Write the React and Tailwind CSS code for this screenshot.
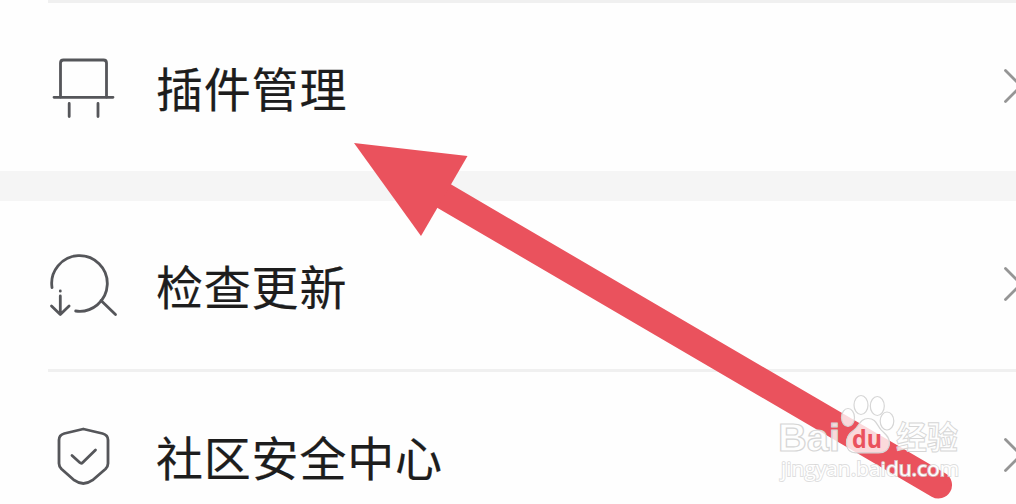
import React from 'react';

const iconProps = {
  fill: 'none',
  stroke: '#55565a',
  strokeWidth: 2.8,
  strokeLinecap: 'round',
  strokeLinejoin: 'round',
  className: 'h-[72px] w-[72px] shrink-0',
};

const PluginIcon = () => (
  <svg viewBox="0 0 72 72" {...iconProps}>
    <path d="M12.5 46V12q0-3 3-3h40q3 0 3 3v34" />
    <path d="M6 46.3h59M21.2 52.5v13M50 52.5v13" />
  </svg>
);

const UpdateIcon = () => (
  <svg viewBox="0 0 72 72" {...iconProps}>
    <path d="M4 38.5A27.8 27.8 0 1 1 27.7 62" />
    <path d="M53 51.5 67.5 65.5" />
    <path d="M12.3 42v.2M12.3 47v18M3.5 57l8.8 8.5 8.8-8.5" />
  </svg>
);

const ShieldIcon = () => (
  <svg viewBox="0 0 72 72" {...iconProps}>
    <path d="M35.3 9 54.5 13.5Q60 15 60 20V43.5Q60 46.5 57.5 49L44.5 60.2Q35.3 66.8 26.2 60.2L13.5 49Q11 46.5 11 43.5V20Q11 15 16.3 13.5Z" />
    <path d="m24 35.5 7.7 7q1.6 1.4 3 0L47.5 30" />
  </svg>
);

const Row = ({ icon, label }) => (
  <div className="flex h-[168px] shrink-0 items-center pl-12">
    {icon}
    <span className="ml-9 text-[47px] leading-[60px] tracking-[0.8px] text-[#1d1d1d] [-webkit-text-stroke:0.2px_#1d1d1d]">
      {label}
    </span>
    <svg
      viewBox="0 0 20 36"
      className="-mr-2 -mt-[3px] ml-auto h-9 w-5 shrink-0"
      fill="none"
      stroke="#959595"
      strokeWidth="2.8"
      strokeLinecap="round"
    >
      <path d="M1.5 2.5 17 18 1.5 33.5" />
    </svg>
  </div>
);

const Watermark = () => (
  <g
    fill="#fff"
    fillOpacity="0.78"
    stroke="#d6d6d6"
    strokeWidth="1.2"
    fontFamily="'Open Sans', 'Noto Sans CJK SC', sans-serif"
  >
    <text x="778" y="451" fontSize="39" fontWeight="700" textLength="62" lengthAdjust="spacingAndGlyphs" fontFamily="'Liberation Sans', sans-serif">Bai</text>
    <ellipse cx="861" cy="405" rx="7" ry="9.5" />
    <ellipse cx="877.3" cy="406" rx="7" ry="9.5" />
    <ellipse cx="848" cy="417.5" rx="6.5" ry="9" />
    <ellipse cx="887" cy="421" rx="6.8" ry="9" />
    <path d="M868 418.5c-8 0-9 8-14 11.5-6 4-8 8-7.5 14 .5 7 4 9 10 8.8h22c6 0 11-3 11-10 0-6-4-8.5-8-12.5-5-5-5-11.8-13.5-11.8Z" />
    <text x="852" y="448" fontSize="25" fontWeight="700" textLength="30" lengthAdjust="spacingAndGlyphs" fill="#ea525d" fillOpacity="1" stroke="none">du</text>
    <text x="896" y="449" fontSize="32" fontWeight="700" textLength="62" lengthAdjust="spacingAndGlyphs" fontFamily="'Noto Sans CJK SC', sans-serif" strokeWidth="0.9">经验</text>
    <text x="781" y="476" fontSize="20" textLength="178" lengthAdjust="spacingAndGlyphs" strokeWidth="1.8" strokeOpacity="0.8" paintOrder="stroke" fillOpacity="1">jingyan.baidu.com</text>
  </g>
);

export default function App() {
  return (
    <div className="relative flex h-[504px] w-[1016px] flex-col overflow-hidden bg-[#fefefe] font-['Noto_Sans_CJK_SC',sans-serif]">
      <div className="ml-12 h-[3px] shrink-0 bg-[#f0f0f0]" />
      <Row icon={<PluginIcon />} label="插件管理" />
      <div className="h-[30px] shrink-0 bg-[#f5f5f5]" />
      <Row icon={<UpdateIcon />} label="检查更新" />
      <div className="ml-12 h-[3px] shrink-0 bg-[#f0f0f0]" />
      <Row icon={<ShieldIcon />} label="社区安全中心" />

      {/* pointer and site mark lie over the list */}
      <svg viewBox="0 0 1016 504" className="pointer-events-none absolute inset-0 h-full w-full">
        <path d="M444 196 938.5 485" stroke="#ea525d" strokeWidth="27" strokeLinecap="round" />
        <path d="M354 143 467.5 156 421 236Z" fill="#ea525d" />
        <Watermark />
      </svg>
    </div>
  );
}
